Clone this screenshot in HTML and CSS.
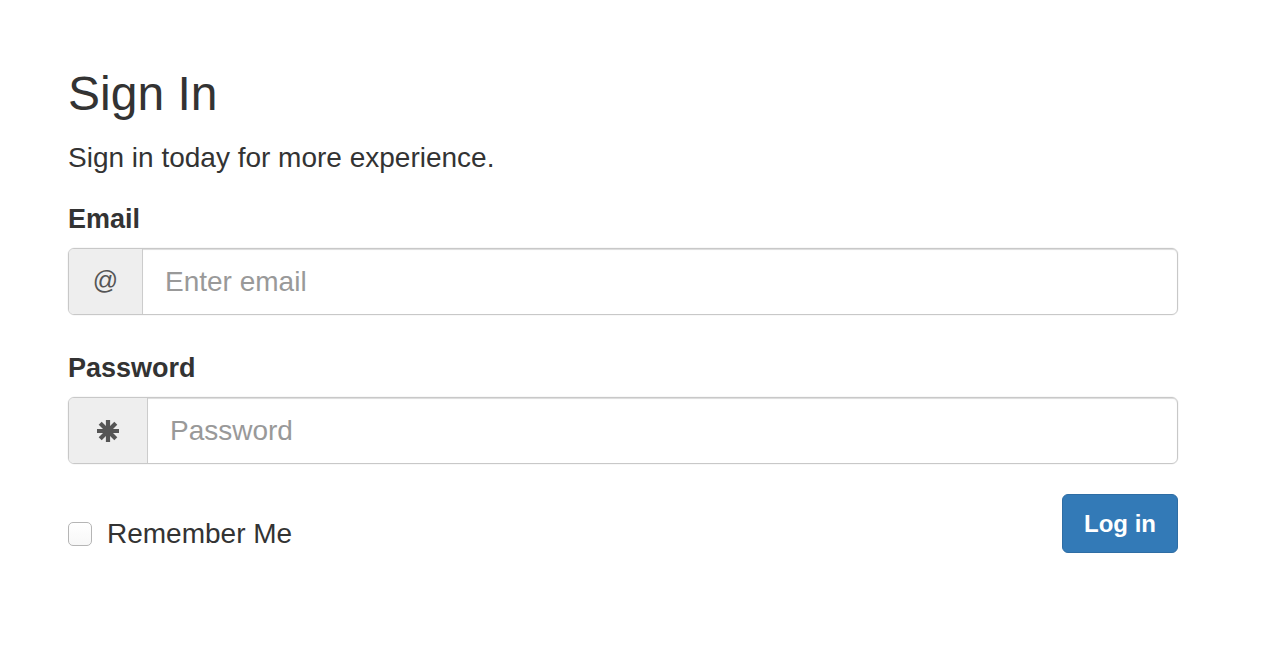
FILE: index.html
```html
<!DOCTYPE html>
<html>
<head>
<meta charset="utf-8">
<link rel="stylesheet" href="styles.css">
</head>
<body>
<div class="container">
  <h1 class="title">Sign In</h1>
  <p class="lead">Sign in today for more experience.</p>
  <form class="form">
    <label class="field-label" for="email">Email</label>
    <div class="input-group">
      <span class="addon addon-email">@</span>
      <input class="field" id="email" type="email" placeholder="Enter email">
    </div>
    <label class="field-label" for="password">Password</label>
    <div class="input-group">
      <span class="addon addon-pass">
        <svg class="asterisk" width="24" height="24" viewBox="0 0 24 24">
          <g stroke="#555" stroke-width="4.2" stroke-linecap="butt">
            <line x1="12" y1="1" x2="12" y2="23"/>
            <line x1="1" y1="12" x2="23" y2="12"/>
            <line x1="4.2" y1="4.2" x2="19.8" y2="19.8"/>
            <line x1="19.8" y1="4.2" x2="4.2" y2="19.8"/>
          </g>
        </svg>
      </span>
      <input class="field" id="password" type="password" placeholder="Password">
    </div>
    <div class="actions">
      <label class="remember"><input class="check" type="checkbox"><span>Remember Me</span></label>
      <button class="btn" type="button">Log in</button>
    </div>
  </form>
</div>
</body>
</html>
```
FILE: styles.css
```css
* { box-sizing: border-box; }
html, body { margin: 0; padding: 0; background: #fff; }
body {
  font-family: "Liberation Sans", Arial, Helvetica, sans-serif;
  color: #333;
}
.container {
  padding: 66px 84px 0 68px;
}
.title {
  margin: 0;
  font-size: 48px;
  line-height: 56px;
  font-weight: 400;
}
.lead {
  margin: 16px 0 0 0;
  font-size: 28px;
  line-height: 40px;
}
.form {
  display: flex;
  flex-direction: column;
  margin-top: 23px;
}
.field-label {
  display: block;
  font-size: 27px;
  line-height: 36px;
  font-weight: 700;
  margin-bottom: 11px;
}
.input-group {
  display: flex;
  height: 67px;
  border: 1px solid #c8c8c8;
  border-radius: 6px;
  overflow: hidden;
  box-shadow: inset 0 1px 1px rgba(0,0,0,.075), 0 0 0 0.5px rgba(0,0,0,.06);
  margin-bottom: 35px;
}
.addon {
  display: flex;
  align-items: center;
  justify-content: center;
  background: #eee;
  border-right: 1px solid #ccc;
  color: #555;
  flex: none;
}
.addon-email {
  width: 74px;
  font-size: 25px;
  padding-bottom: 2px;
}
.addon-pass {
  width: 79px;
}
.field {
  flex: 1;
  border: 0;
  outline: 0;
  background: transparent;
  padding: 0 22px;
  font-family: "Liberation Sans", Arial, Helvetica, sans-serif;
  font-size: 28px;
  color: #555;
  box-shadow: inset 0 1px 1px rgba(0,0,0,.075);
}
.field::placeholder { color: #999; }
.actions {
  display: flex;
  justify-content: space-between;
  align-items: flex-start;
  margin-top: -5px;
}
.remember {
  display: flex;
  align-items: center;
  margin-top: 24px;
  font-size: 28px;
  line-height: 32px;
}
.check {
  appearance: none;
  -webkit-appearance: none;
  width: 24px;
  height: 24px;
  margin: 0 15px 0 0;
  border: 1px solid #b5b5b5;
  border-radius: 5px;
  background: linear-gradient(#fff, #f7f7f7);
}
.btn {
  width: 116px;
  height: 59px;
  background: #337ab7;
  border: 1px solid #2e6da4;
  border-radius: 6px;
  color: #fff;
  font-family: "Liberation Sans", Arial, Helvetica, sans-serif;
  font-weight: 700;
  font-size: 24px;
  padding: 0;
}
```
